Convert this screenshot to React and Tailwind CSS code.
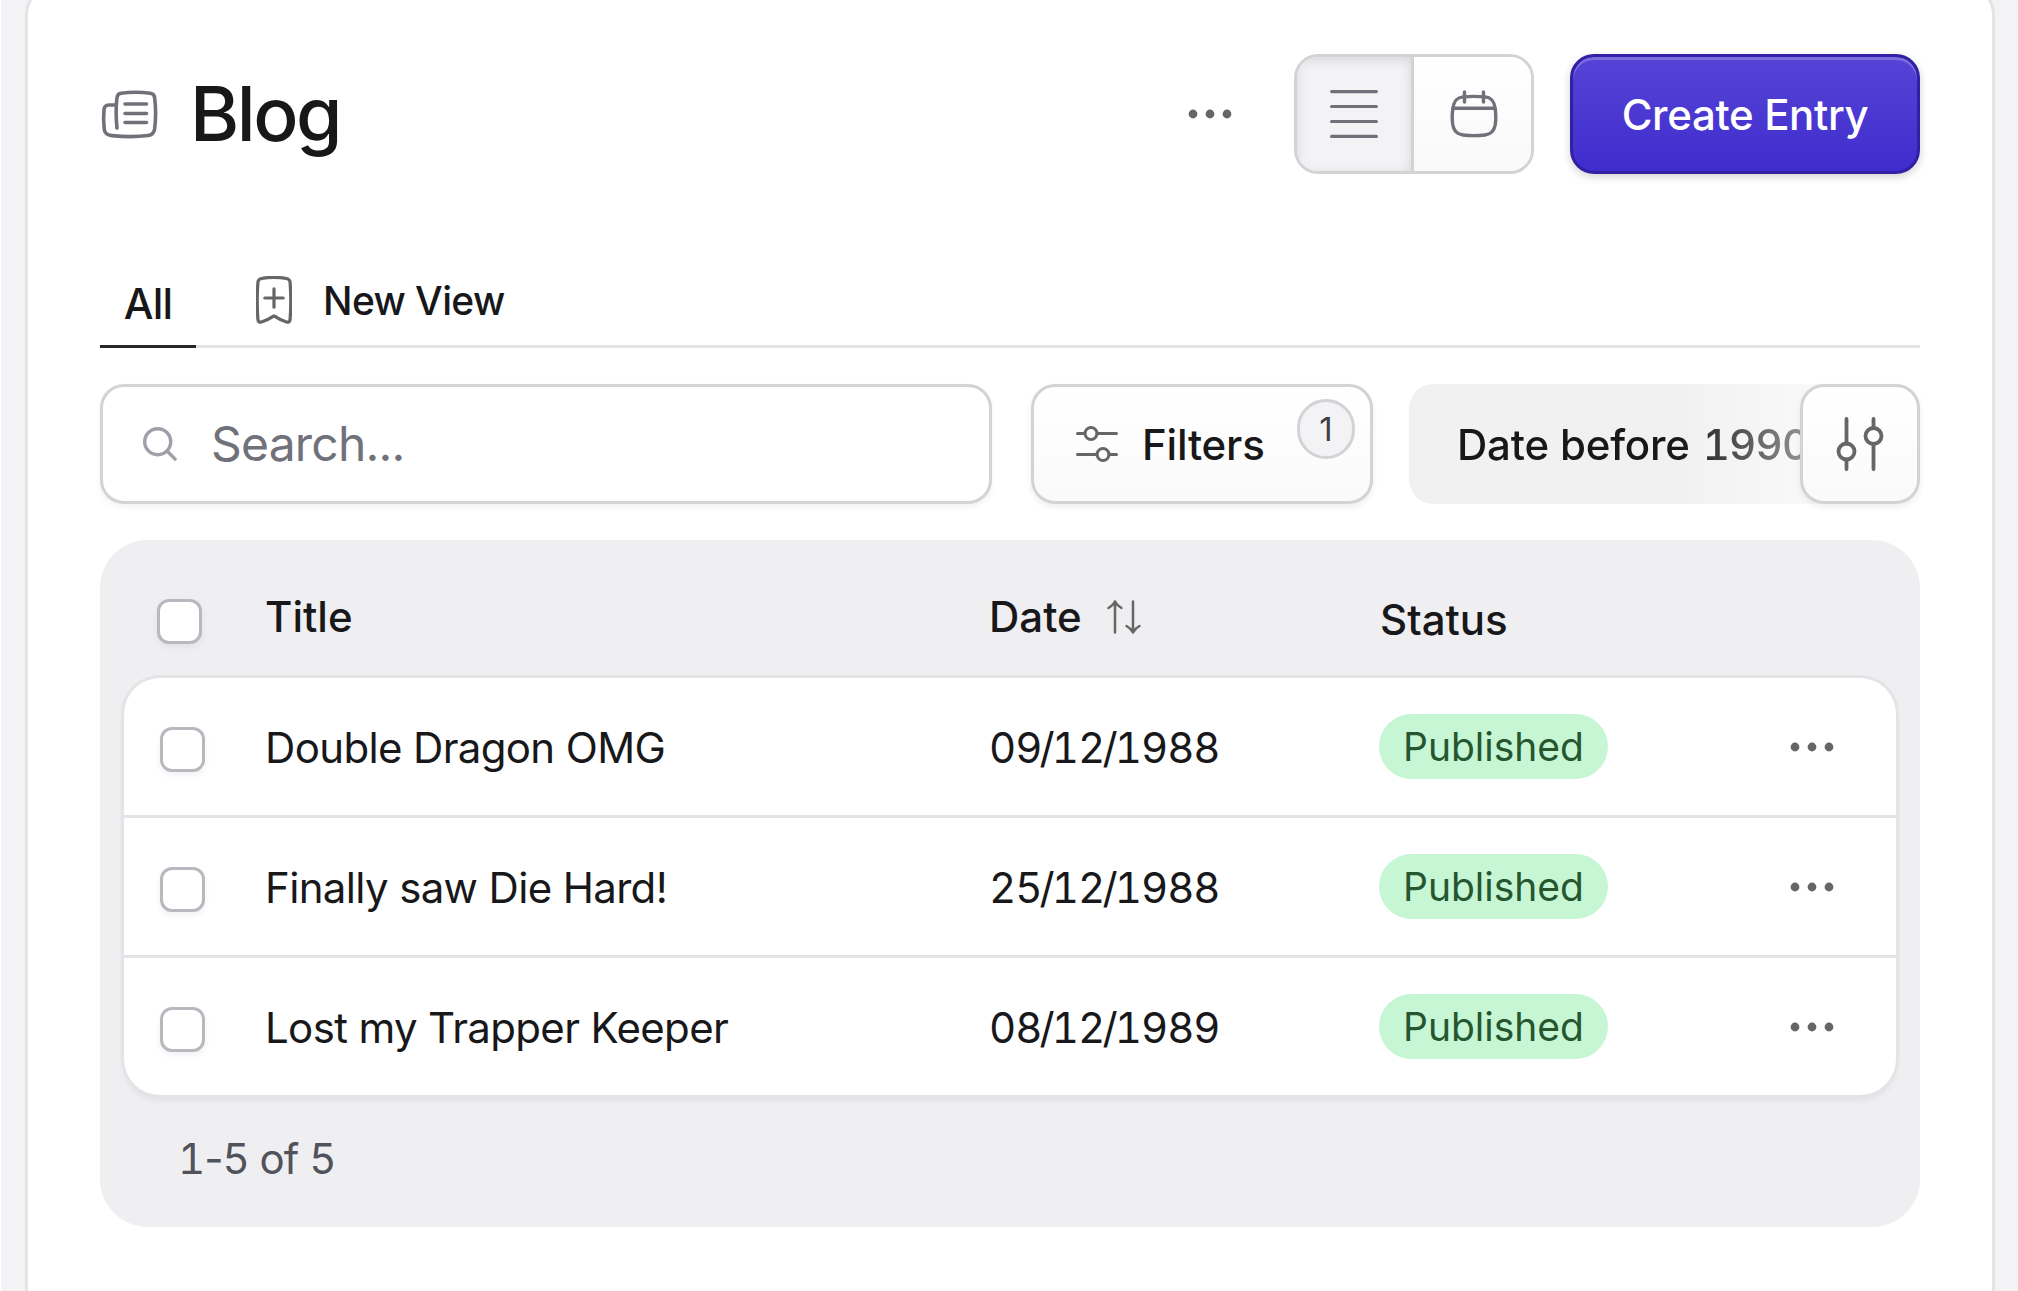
import { useState } from 'react';

const ENTRIES = [
  { id: 1, title: 'Double Dragon OMG', date: '09/12/1988', status: 'Published' },
  { id: 2, title: 'Finally saw Die Hard!', date: '25/12/1988', status: 'Published' },
  { id: 3, title: 'Lost my Trapper Keeper', date: '08/12/1989', status: 'Published' },
];

const buttonStyles =
  'flex h-[120px] items-center rounded-[24px] border-[3px] border-[#d3d3d6] bg-linear-to-b from-white to-[#fafafa] shadow-[0_3px_6px_rgba(0,0,0,0.07)]';

export default function App() {
  const [view, setView] = useState('list');
  const [selected, setSelected] = useState([]);
  const allSelected = selected.length === ENTRIES.length;

  function toggle(id) {
    setSelected(selected.includes(id) ? selected.filter((item) => item !== id) : [...selected, id]);
  }

  function toggleAll() {
    setSelected(allSelected ? [] : ENTRIES.map((entry) => entry.id));
  }

  return (
    <div className="flex h-[1291px] w-[2018px] overflow-hidden border-l border-white bg-[#f3f3f6] pl-6 font-['Inter','Liberation_Sans',sans-serif] text-[42px] leading-[60px] text-[#18181b]">
      <main className="-mt-5 h-[1400px] w-[1970px] shrink-0 rounded-[36px] border-[3px] border-[#e4e4e7] bg-white px-[72px] pt-[71px]">
        <header className="flex h-[120px] items-center">
          <NewspaperIcon />
          <h1 className="ml-[30px] text-[75px] leading-[90px] font-medium tracking-[-2.5px]">Blog</h1>
          <button type="button" aria-label="Actions" className="ml-auto">
            <Dots />
          </button>
          <div className="ml-[62px] flex h-[120px] w-[240px] overflow-hidden rounded-[24px] border-[3px] border-[#d3d3d6]">
            <button
              type="button"
              aria-label="List"
              onClick={() => setView('list')}
              className={`flex w-[117px] items-center justify-center border-r-[3px] border-[#d3d3d6] ${
                view === 'list' ? 'bg-[#f3f3f6] shadow-[inset_0_3px_12px_rgba(0,0,0,0.12)]' : 'bg-white'
              }`}
            >
              <ListIcon />
            </button>
            <button
              type="button"
              aria-label="Calendar"
              onClick={() => setView('calendar')}
              className="flex flex-1 items-center justify-center bg-linear-to-b from-white to-[#f9f9f9] pl-0.5"
            >
              <CalendarIcon />
            </button>
          </div>
          <button
            type="button"
            className="ml-9 h-[120px] w-[350px] rounded-[24px] border-[3px] border-[#3120a3] bg-linear-to-b from-[#5643d6] to-[#402ccd] pt-0.5 text-[42px] font-medium tracking-[-0.35px] text-white shadow-[inset_0_3px_0_#7d6ee0,0_3px_8px_rgba(0,0,0,0.18)]"
          >
            Create Entry
          </button>
        </header>

        <nav className="mt-[90px] flex h-[84px] border-b-[3px] border-[#e4e4e7] font-medium">
          <button type="button" className="h-[84px] w-24 border-b-[3px] border-[#27272a] pb-[2px] text-center text-[42px] leading-[60px] font-[450] tracking-[-0.8px]">
            All
          </button>
          <button type="button" className="ml-[60px] flex h-[72px] items-center text-[39px]">
            <BookmarkIcon />
            <span className="ml-[31px] pt-0.5 tracking-[-0.6px]">New View</span>
          </button>
        </nav>

        <div className="mt-9 flex">
          <label className="flex h-[120px] w-[892px] items-center rounded-[24px] border-[3px] border-[#d3d3d6] bg-white pl-10 shadow-[0_3px_6px_rgba(0,0,0,0.05)]">
            <SearchIcon />
            <input
              type="text"
              placeholder="Search..."
              className="ml-[34px] w-[700px] bg-transparent text-[48px] tracking-[-0.8px] outline-none placeholder:text-[#71717a]"
            />
          </label>
          <button type="button" className={`${buttonStyles} relative ml-[39px] w-[342px] pl-[42px] font-medium`}>
            <FiltersIcon />
            <span className="ml-6 pt-0.5 tracking-[-0.2px]">Filters</span>
            <span className="absolute top-3 right-[15px] flex h-[60px] w-[58px] items-center justify-center rounded-full border-[3px] border-[#d3d3d6] bg-[#f3f3f5] text-[33px] font-normal text-[#3f3f46]">
              1
            </span>
          </button>
          <div className="ml-9 flex">
            <div className="-mr-[120px] h-[120px] w-[511px] rounded-[24px] bg-[#f1f1f1] mask-[linear-gradient(to_right,black_271px,transparent_503px)] pl-12 leading-[122px] font-medium tracking-[-0.2px] whitespace-nowrap">
              Date before <span className="ml-0.5 tracking-[-0.8px] tabular-nums">1990</span>
            </div>
            <button type="button" aria-label="Columns" className={`${buttonStyles} relative w-[120px] shrink-0 justify-center`}>
              <ColumnsIcon />
            </button>
          </div>
        </div>

        <section className="mt-9 h-[687px] rounded-[48px] bg-[#efeff1] px-6">
          <div className="flex h-[138px] items-start pt-[47px]">
            <div className="w-[141px] pt-3 pl-[33px]">
              <Checkbox checked={allSelected} onChange={toggleAll} />
            </div>
            <div className="w-[724px] font-medium">Title</div>
            <div className="flex w-[391px] items-center font-medium">
              Date
              <SortIcon />
            </div>
            <div className="pt-[3px] font-medium">Status</div>
          </div>
          <div className="rounded-[36px] bg-white shadow-[0_0_0_3px_#e4e4e7,0_6px_6px_rgba(0,0,0,0.06)]">
            {ENTRIES.map((entry) => (
              <div key={entry.id} className="flex h-[140px] items-start border-b-[3px] border-[#e4e4e7] pt-[36px] last:h-[137px] last:border-b-0">
                <div className="w-[141px] pt-[13px] pl-9">
                  <Checkbox checked={selected.includes(entry.id)} onChange={() => toggle(entry.id)} />
                </div>
                <div className="w-[724px] pt-1 tracking-[-0.65px]">{entry.title}</div>
                <div className="w-[390px] pt-1">
                  <Numeric text={entry.date} separator="-mx-[1.900px]" />
                </div>
                <span className="flex h-[65px] w-[229px] items-center justify-center rounded-full bg-[#c6f6d3] text-[39px] text-[#25562f]">
                  {entry.status}
                </span>
                <button type="button" aria-label="Row actions" className="mt-[28px] mr-[62px] ml-auto">
                  <Dots />
                </button>
              </div>
            ))}
          </div>
          <p className="mt-[34px] ml-[54px] text-[#52525b]">
            <Numeric text="1-5 of 5" />
          </p>
        </section>
      </main>
    </div>
  );
}

// Tabular figures for the digits only, so slashes and spaces stay narrow
function Numeric({ text, separator }) {
  return (
    <span className="tracking-[-1px]">
      {text.split(/(\d+)/).map((part, index) => (
        <span key={index} className={/\d/.test(part) ? 'tabular-nums' : part && separator}>{part}</span>
      ))}
    </span>
  );
}

function Checkbox({ checked, onChange }) {
  return (
    <input
      type="checkbox"
      checked={checked}
      onChange={onChange}
      className="block size-[45px] appearance-none rounded-[12px] border-[3px] border-[#b8b8bf] bg-white shadow-[0_3px_6px_rgba(0,0,0,0.06)] checked:bg-[#402ccd]"
    />
  );
}

function Dots() {
  return (
    <svg width="44" height="10" viewBox="0 0 44 10" fill="#666666">
      <circle cx="5" cy="5" r="4.4" />
      <circle cx="22" cy="5" r="4.4" />
      <circle cx="39" cy="5" r="4.4" />
    </svg>
  );
}

function NewspaperIcon() {
  return (
    <svg width="60" height="60" viewBox="0 0 60 60" fill="none" stroke="#71717a" strokeWidth="3.600" strokeLinecap="round" strokeLinejoin="round">
      <path d="M17 44 C16 34 15.500 25 17 13.500 C17.500 10.500 19 9.600 21 9.300 C30 8 41 8 50.500 9.300 C53 9.700 54.200 10.800 54.600 13.500 C56 24 56 34 54.600 45 C54 49 52 51 48 51.500 C37 53 25 53 12 51.600 C7 51 4.600 49.500 4.200 45 C3.300 37 3.300 33 4 26 C4.200 22.500 5.500 21 9 21 L16 21" />
      <path d="M25 20 H46.500 M25 29.500 H46.500 M25 38.500 H46.500" />
    </svg>
  );
}

function ListIcon() {
  return (
    <svg width="48" height="48" viewBox="0 0 48 48" fill="none" stroke="#71717a" strokeWidth="3.200" strokeLinecap="round">
      <path d="M1.600 1.600 H46.400 M1.600 16.500 H46.400 M1.600 31.500 H46.400 M1.600 46.400 H46.400" />
    </svg>
  );
}

function CalendarIcon() {
  return (
    <svg width="48" height="48" viewBox="0 0 48 48" fill="none" stroke="#71717a" strokeWidth="3.400" strokeLinecap="round">
      <path d="M2.800 18.500 C4 10.500 7 7.400 13 6.900 C20 6.200 28 6.200 35 6.900 C41 7.400 44 10.500 45.200 18.500 C46 25 46 30 45.200 35 C44 41.500 41 44.300 35 45 C28 45.800 20 45.800 13 45 C7 44.300 4 41.500 2.800 35 C2 30 2 25 2.800 18.500 Z" />
      <path d="M3 18.300 H45 M14.500 2 V12 M33.500 2 V12" />
    </svg>
  );
}

function BookmarkIcon() {
  return (
    <svg width="36" height="48" viewBox="0 0 36 48" fill="none" stroke="#666666" strokeWidth="3.200" strokeLinecap="round" strokeLinejoin="round">
      <path d="M1.900 6.500 C2 4 3.200 3 5.500 2.500 C13 1.200 23 1.200 30.500 2.500 C32.800 3 34 4 34.100 6.500 C35 19 35 31 34.100 43.500 C33.800 46 32.500 46.600 30.500 45.900 C25.500 44.300 22.500 42.800 18 39.800 C13.500 42.800 10.500 44.300 5.500 45.900 C3.500 46.600 2.200 46 1.900 43.500 C1 31 1 19 1.900 6.500 Z" />
      <path d="M18 12.800 V31.200 M8.800 22 H27.200" />
    </svg>
  );
}

function SearchIcon() {
  return (
    <svg width="34" height="34" viewBox="0 0 34 34" fill="none" stroke="#9f9fa9" strokeWidth="3.400" strokeLinecap="round">
      <circle cx="14.700" cy="14.700" r="13" />
      <path d="M24.300 24.300 L32.100 32.100" />
    </svg>
  );
}

function FiltersIcon() {
  return (
    <svg width="42" height="36" viewBox="0 0 42 36" fill="none" stroke="#666666" strokeWidth="3" strokeLinecap="round">
      <circle cx="15" cy="7.500" r="6" />
      <circle cx="27" cy="28.500" r="6" />
      <path d="M1.500 7.500 H9 M21 7.500 H40.500 M1.500 28.500 H21 M33 28.500 H40.500" />
    </svg>
  );
}

function ColumnsIcon() {
  return (
    <svg width="48" height="54" viewBox="0 0 48 54" fill="none" stroke="#666666" strokeWidth="3.800" strokeLinecap="round">
      <circle cx="10.500" cy="34.500" r="8" />
      <circle cx="37.500" cy="19" r="8" />
      <path d="M10.500 2 V26.500 M10.500 42.500 V52 M37.500 2 V11 M37.500 27 V52" />
    </svg>
  );
}

function SortIcon() {
  return (
    <svg className="ml-[25px]" width="34" height="34" viewBox="0 0 34 34" fill="none" stroke="#666666" strokeWidth="2.500" strokeLinecap="round" strokeLinejoin="round">
      <path d="M8 32.500 V1.500 M1.500 8 C4.500 6.500 6.500 4.500 8 1.500 C9.500 4.500 11.500 6.500 14.500 8" />
      <path d="M26 1.500 V32.500 M19.500 26 C22.500 27.500 24.500 29.500 26 32.500 C27.500 29.500 29.500 27.500 32.500 26" />
    </svg>
  );
}
